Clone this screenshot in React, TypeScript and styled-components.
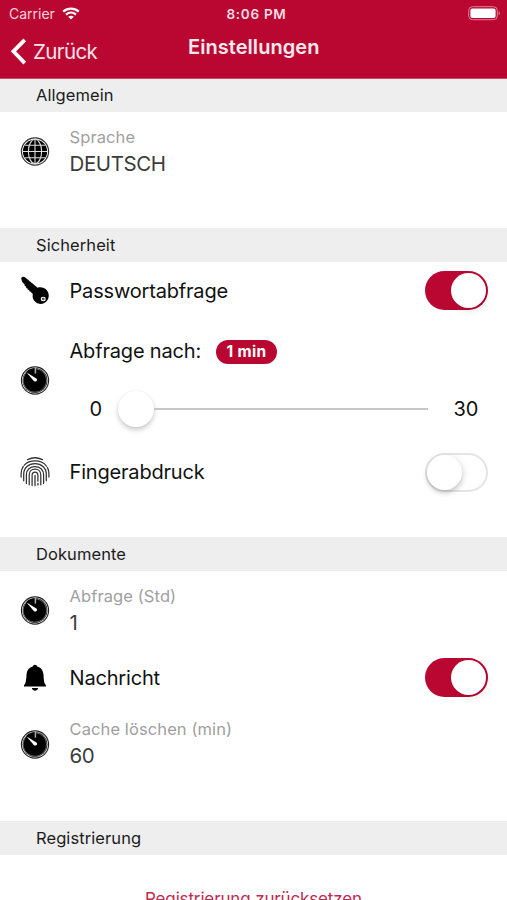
import React from "react";
import styled, { createGlobalStyle } from "styled-components";

const Global = createGlobalStyle`
  * { box-sizing: border-box; }
  body { margin: 0; background: #fff; overflow: hidden; font-family: Inter, sans-serif; color: #111; }
`;

const red = "#ba0732";

const Screen = styled.div`
  width: 507px;
  height: 900px;
  overflow: hidden;
  background: #fff;
`;

const Header = styled.header`
  height: 79px;
  background: ${red};
  color: #fff;
  border-bottom: 1px solid #c64c66;
`;

const StatusBar = styled.div`
  height: 27px;
  padding: 0 6px 0 9px;
  display: grid;
  grid-template-columns: 1fr auto 1fr;
  align-items: center;
  svg { display: block; }
`;

const Carrier = styled.div`
  display: flex;
  align-items: center;
  gap: 7px;
  font-size: 14px;
  line-height: 27px;
  color: #f6d3db;
`;

const Clock = styled.div`
  font-size: 13.5px;
  font-weight: 600;
  letter-spacing: 0.7px;
  color: #f9dde3;
  margin-left: 3px;
`;

const Battery = styled.div`
  justify-self: end;
`;

const NavBar = styled.div`
  display: grid;
  grid-template-columns: 188px 1fr;
  height: 51px;
`;

const Back = styled.div`
  display: flex;
  align-items: center;
  height: 49px;
  padding-left: 10px;
  gap: 6px;
  font-size: 20.5px;
  letter-spacing: -0.6px;
  color: #fbe3e8;
`;

const Title = styled.h1`
  margin: 0;
  font-size: 20px;
  font-weight: 600;
  line-height: 40px;
  letter-spacing: 0.05px;
  color: #fce9ed;
`;

const SectionHead = styled.h2<{ $h?: number }>`
  margin: 0;
  height: ${(p) => p.$h ?? 34}px;
  padding-left: 36px;
  background: #eeeeee;
  font-size: 16.5px;
  font-weight: 400;
  letter-spacing: 0.08px;
  line-height: ${(p) => p.$h ?? 34}px;
  color: #1c1c1c;
`;

const Body = styled.div<{ $h: number; $top?: number }>`
  height: ${(p) => p.$h}px;
  padding-top: ${(p) => p.$top ?? 0}px;
`;

const Row = styled.div<{ $h: number }>`
  height: ${(p) => p.$h}px;
  display: grid;
  grid-template-columns: 69px 1fr auto;
  align-items: center;
  padding-right: 19px;
`;

const IconCell = styled.div`
  padding-left: 20px;
  svg { display: block; }
`;

const Label = styled.div`
  padding-left: 0.5px;
  font-size: 20px;
  line-height: 24px;
  letter-spacing: -0.18px;
`;

const Field = styled.div<{ $drop?: number }>`
  padding: ${(p) => p.$drop ?? 4}px 0 0 0.5px;
`;

const Caption = styled.div`
  font-size: 16.5px;
  line-height: 22px;
  letter-spacing: 0.1px;
  color: #a0a0a0;
`;

const Value = styled.div`
  font-size: 20.5px;
  line-height: 32px;
  letter-spacing: -0.4px;
  color: #3c3c3c;
`;

const IntervalPanel = styled.div`
  height: 122px;
  padding-top: 20px;
`;

const IntervalTitle = styled.div`
  display: flex;
  align-items: center;
  height: 24px;
  gap: 15px;
`;

const Badge = styled.span`
  height: 24px;
  width: 61px;
  margin-top: 2px;
  border-radius: 12px;
  background: ${red};
  color: #fff;
  font-size: 15.5px;
  font-weight: 700;
  letter-spacing: 0.3px;
  line-height: 24px;
  text-align: center;
`;

const SliderRow = styled.div`
  display: grid;
  grid-template-columns: 29px 335px 1fr;
  align-items: center;
  height: 36px;
  margin-top: 28px;
  padding-left: 20px;
`;

const Track = styled.div`
  display: flex;
  align-items: center;
  width: 310px;
  &::after {
    content: "";
    flex: 1;
    height: 2px;
    background: #c7c7c7;
  }
`;

const Thumb = styled.div`
  width: 36px;
  height: 36px;
  border-radius: 50%;
  background: #fff;
  box-shadow: 0 3px 5px rgba(0, 0, 0, 0.2), 0 0 2px rgba(0, 0, 0, 0.06);
`;

const SwitchBase = styled.div<{ $on: boolean }>`
  width: 63px;
  height: 39px;
  border-radius: 20px;
  border: ${(p) => (p.$on ? "0" : "2px solid #e5e5e5")};
  background: ${(p) => (p.$on ? red : "#fff")};
  display: flex;
  align-items: center;
  justify-content: ${(p) => (p.$on ? "flex-end" : "flex-start")};
  padding: ${(p) => (p.$on ? "0 2px" : "0")};
`;

const Knob = styled.div<{ $on: boolean }>`
  width: 35px;
  height: 35px;
  border-radius: 50%;
  background: #fff;
  box-shadow: ${(p) =>
    p.$on ? "2px 4px 6px rgba(0,0,0,0.07)" : "0 3px 5px rgba(0,0,0,0.18), 2px 1px 8px rgba(0,0,0,0.07)"};
`;

const Reset = styled.div`
  padding-top: 33px;
  text-align: center;
  font-size: 17px;
  line-height: 22px;
  letter-spacing: -0.14px;
  color: #c12a50;
`;

const Switch = ({ on }: { on: boolean }) => (
  <SwitchBase $on={on} role="switch" aria-checked={on}>
    <Knob $on={on} />
  </SwitchBase>
);

const WifiIcon = () => (
  <svg width="18" height="13" viewBox="0 0 18 13" fill="none" stroke="#fff" strokeWidth="2.1">
    <path d="M1.2 4.6C5.8.6 12.2.6 16.8 4.6" />
    <path d="M4 7.6c3-2.6 7-2.6 10 0" />
    <path d="M6.2 9.7c1.7-1.4 3.9-1.4 5.6 0L9 12.6z" fill="#fff" stroke="none" />
  </svg>
);

const BatteryIcon = () => (
  <svg width="33" height="15" viewBox="0 0 33 15">
    <rect x=".7" y=".7" width="28.6" height="13" rx="3.8" fill="none" stroke="#dc8195" strokeWidth="1" />
    <rect x="2.4" y="2.4" width="25.2" height="9.6" rx="2" fill="#fff" />
    <path d="M30.7 5.2c1.6.6 1.6 3.4 0 4z" fill="#dc8195" />
  </svg>
);

const ChevronIcon = () => (
  <svg width="17" height="27" viewBox="0 0 17 27" fill="none" stroke="#fff" strokeWidth="3.8">
    <path d="M14.8 1.8 3.4 13.3l11.4 11.8" />
  </svg>
);

const GlobeIcon = () => (
  <svg width="30" height="30" viewBox="0 0 30 30" fill="none">
    <circle cx="15" cy="15.5" r="13.6" stroke="#333" strokeWidth="1.2" />
    <circle cx="15" cy="15.5" r="12.1" fill="#000" />
    <g stroke="#ddd" strokeWidth="1.1">
      <path d="M15 3.3v24.4M2.8 15.5h24.4M4.8 9.3h20.4M4.8 21.7h20.4" />
      <ellipse cx="15" cy="15.5" rx="6.6" ry="12.2" />
    </g>
  </svg>
);

const KeyIcon = () => (
  <svg width="30" height="30" viewBox="0 0 30 30">
    <path d="M1.2 2.6C1.5.6 3.5.1 5 1.3l12.6 10.4c3.2-1 6.8-.2 9 2.3 2.6 3.1 2.9 7.3.6 10.6-2.5 3.6-7.6 4.4-11.1 1.9-2.9-2.1-4.1-5.4-3.3-8.6l-2.4-2.3-.9-.2-.3-1.3-1.3-.3-.4-1.4-1.3-.4-.1-1.4-1.3-.5-.2-1.7-2.4-2.3z" fill="#050505" />
    <ellipse cx="23.2" cy="23" rx="2" ry="1.7" fill="#555" stroke="#fff" strokeWidth="1.1" />
  </svg>
);

const DialIcon = () => (
  <svg width="30" height="30" viewBox="0 0 30 30" fill="none">
    <circle cx="15" cy="15.5" r="13.6" stroke="#222" strokeWidth="1.1" />
    <circle cx="15" cy="15.5" r="12.4" fill="#000" />
    <path d="M15.2 3.8A11.7 11.7 0 1 1 6.2 7.6" stroke="#999" strokeWidth=".7" />
    <path d="M15.4 2.6v6" stroke="#aaa" strokeWidth="1.5" />
    <path d="m6.6 7.5 9.8 5.9c1.9 1.7-.9 4.4-2.6 2.5z" fill="#fff" />
  </svg>
);

const FingerprintIcon = () => (
  <svg width="30" height="30" viewBox="0 0 30 30" fill="none" stroke="#333" strokeWidth="1.25" strokeLinecap="round">
    <path d="M7.6 2.6C12 .4 18 .4 22.4 2.6" />
    <path d="M1.1 20v-3.6C1.3 9 6.8 3.9 15 3.9S28.7 9 28.9 16.4V20" strokeDasharray="11 1.6 25 1.6 20" />
    <path d="M3.7 23.8v-6.6C3.7 10.6 8.6 6.6 15 6.6s11.3 4 11.3 10.6v6.6" />
    <path d="M6.4 26.4v-8.8c0-5 3.8-8.1 8.6-8.1s8.6 3.1 8.6 8.1v8.8" />
    <path d="M9.2 27.8v-9.7c0-3.6 2.5-5.9 5.8-5.9s5.8 2.3 5.8 5.9v9.7" />
    <path d="M12.1 28.6v-10c0-4.6 5.8-4.6 5.8 0v5.6m0 2.2v1.6M15 18.4v10.3" />
  </svg>
);

const BellIcon = () => (
  <svg width="30" height="30" viewBox="0 0 30 30" fill="#000">
    <path d="M15 1.7c1.3 0 2.1.8 2.2 1.9 4.2 1 6 4.3 6.3 8.3.3 5.4.6 8.3 2.5 10.4v1.3H4v-1.3c1.9-2.1 2.2-5 2.5-10.4.3-4 2.1-7.3 6.3-8.3.1-1.1.9-1.9 2.2-1.9z" />
    <path d="M11.9 24.9h6.2c-.5 3.7-5.7 3.7-6.2 0z" />
  </svg>
);

export default function App() {
  return (
    <Screen>
      <Global />
      <Header>
        <StatusBar>
          <Carrier>Carrier <WifiIcon /></Carrier>
          <Clock>8:06 PM</Clock>
          <Battery><BatteryIcon /></Battery>
        </StatusBar>
        <NavBar>
          <Back><ChevronIcon />Zurück</Back>
          <Title>Einstellungen</Title>
        </NavBar>
      </Header>

      <SectionHead $h={33}>Allgemein</SectionHead>
      <Body $h={116} $top={10}>
        <Row $h={58}>
          <IconCell><GlobeIcon /></IconCell>
          <Field>
            <Caption>Sprache</Caption>
            <Value>DEUTSCH</Value>
          </Field>
        </Row>
      </Body>

      <SectionHead>Sicherheit</SectionHead>
      <Body $h={275}>
        <Row $h={57}>
          <IconCell><KeyIcon /></IconCell>
          <Label>Passwortabfrage</Label>
          <Switch on />
        </Row>
        <Row $h={122}>
          <IconCell><DialIcon /></IconCell>
          <IntervalPanel>
            <IntervalTitle>
              <Label>Abfrage nach:</Label>
              <Badge>1 min</Badge>
            </IntervalTitle>
            <SliderRow>
              <Label>0</Label>
              <Track><Thumb /></Track>
              <Label>30</Label>
            </SliderRow>
          </IntervalPanel>
        </Row>
        <Row $h={62}>
          <IconCell><FingerprintIcon /></IconCell>
          <Label>Fingerabdruck</Label>
          <Switch on={false} />
        </Row>
      </Body>

      <SectionHead>Dokumente</SectionHead>
      <Body $h={250} $top={10}>
        <Row $h={58}>
          <IconCell><DialIcon /></IconCell>
          <Field>
            <Caption>Abfrage (Std)</Caption>
            <Value>1</Value>
          </Field>
        </Row>
        <Row $h={77}>
          <IconCell><BellIcon /></IconCell>
          <Label>Nachricht</Label>
          <Switch on />
        </Row>
        <Row $h={56}>
          <IconCell><DialIcon /></IconCell>
          <Field $drop={2}>
            <Caption>Cache löschen (min)</Caption>
            <Value>60</Value>
          </Field>
        </Row>
      </Body>

      <SectionHead>Registrierung</SectionHead>
      <Reset>Registrierung zurücksetzen</Reset>
    </Screen>
  );
}
